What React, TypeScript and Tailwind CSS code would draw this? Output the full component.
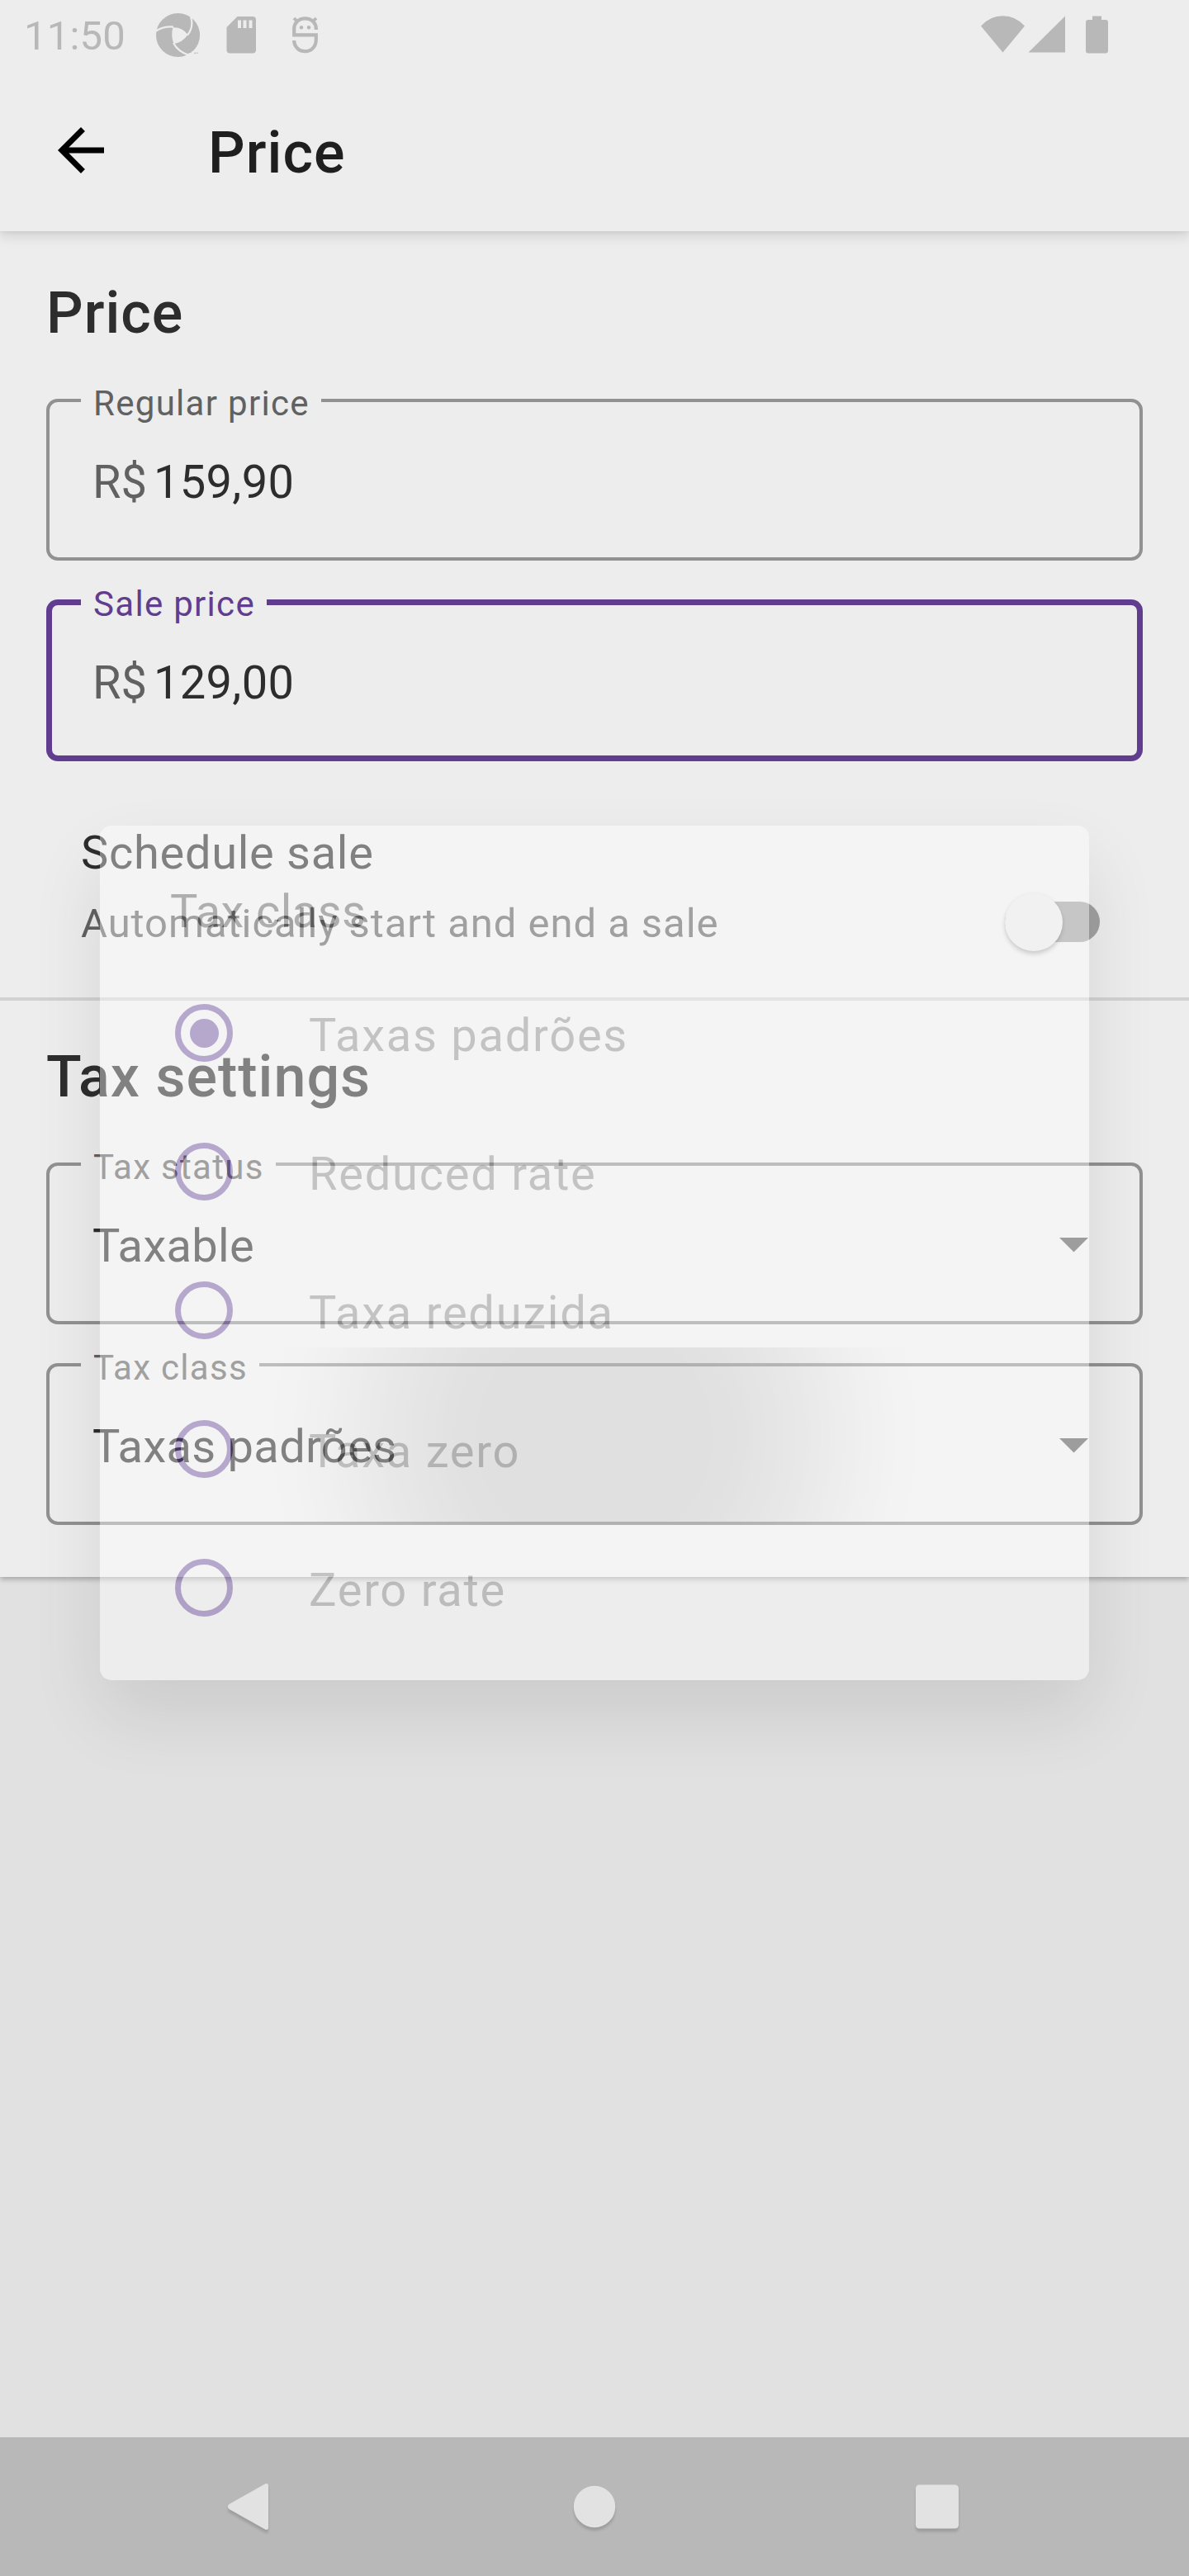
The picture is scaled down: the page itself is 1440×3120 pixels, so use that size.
import type { ReactNode } from 'react';

function StatusBar() {
  return (
    <div className="flex h-[84px] shrink-0 items-start text-[#b8b8b8]">
      <span className="ml-[29px] mt-[14px] w-[160px] text-[49px] leading-[60px] tracking-[0.2px]">11:50</span>
      <svg className="mt-[16px] h-[53px] w-[53px]" viewBox="0 0 53 53">
        <circle cx="26.5" cy="26.5" r="26.5" fill="currentColor" />
        <path d="M19 17.5Q31 16 38.5 26Q32 35.5 21.5 37Q17.5 28 20.5 16.5Z" fill="#ededed" />
        <path
          d="M0 21.5Q9 15.5 21 16.5M42 4.5Q46 17 38 26.5M21 36Q26.5 46.5 40 51"
          fill="none"
          stroke="#ededed"
          strokeWidth="2.2"
        />
        <path d="M35 52L42 46.500L53 43V53H35Z" fill="#ededed" />
        <path d="M34 40Q47 34 52.6 22Q54 38 42 48Q36 49 30 44Z" fill="currentColor" />
        <path d="M46 48h2M47 48v1.500M49 49v-1.500M50.500 49v-1.500" stroke="currentColor" strokeWidth=".8" />
      </svg>
      <svg className="ml-[32px] mt-[20px] h-[45px] w-[37px]" viewBox="0 0 37 45">
        <path
          fill="currentColor"
          fillRule="evenodd"
          d="M13.500 0H32a4 4 0 0 1 4 4V40.500a4 4 0 0 1-4 4H4.500a4 4 0 0 1-4-4V13ZM14 4.500V14h4V4.500ZM20.500 4.500V14h4V4.500ZM27.500 4.500V14H31.500V4.500Z"
        />
      </svg>
      <svg className="ml-[42px] mt-[20px] h-[45px] w-[34px]" viewBox="0 0 34 45" fill="none" stroke="currentColor">
        <path
          strokeWidth="4.200"
          d="M29.800 16V14.500C29.800 8 24.500 2.300 16.500 2.300S3.200 8 3.200 14.500V22.300H29.800V28C29.800 36 24.500 42.200 16.500 42.200S3.200 36 3.200 29"
        />
        <path strokeWidth="3.800" d="M3 2L7 6M30 2L26 6" />
        <circle cx="12" cy="13.300" r="2.200" fill="currentColor" stroke="none" />
        <circle cx="21" cy="13.300" r="2.200" fill="currentColor" stroke="none" />
      </svg>
      <div className="flex-1" />
      <svg className="mt-[19px] h-[45px] w-[53px]" viewBox="0 0 53 45" fill="currentColor">
        <path d="M0 12.500Q11 .3 26.500 .3T53 12.500L26.500 44.500Z" />
      </svg>
      <svg className="ml-[4px] mt-[19px] h-[45px] w-[45px]" viewBox="0 0 45 45" fill="currentColor">
        <path d="M.5 44.500L45 .5V44.500Z" />
      </svg>
      <svg className="ml-[25px] mr-[98px] mt-[19px] h-[46px] w-[27px]" viewBox="0 0 27 46" fill="currentColor">
        <path d="M8 .5H19V5H24a3 3 0 0 1 3 3V42.500a3 3 0 0 1-3 3H3a3 3 0 0 1-3-3V8a3 3 0 0 1 3-3H8Z" />
      </svg>
    </div>
  );
}

function Toolbar() {
  return (
    <div className="flex h-[196px] shrink-0 items-start">
      <svg className="ml-[56px] mt-[56px] h-[84px] w-[84px]" viewBox="0 0 24 24" fill="#000">
        <path d="M20 11H7.830l5.590-5.590L12 4l-8 8 8 8 1.410-1.410L7.830 13H20v-2z" />
      </svg>
      <h1 className="ml-[112px] mt-[60px] text-[70px] font-medium leading-[82px] tracking-[1.05px] text-[#1f1f1f]">
        Price
      </h1>
    </div>
  );
}

type FieldProps = { label: string; focused?: boolean; children: ReactNode };

function OutlinedField({ label, focused, children }: FieldProps) {
  return (
    <div
      className={
        'relative flex h-[196px] items-start rounded-[14px] px-[56px] pt-[68px] text-[56px] leading-[66px] tracking-[0.3px] text-[#2d2d2d] ' +
        (focused ? 'shadow-[inset_0_0_0_7px_#613d8f]' : 'shadow-[inset_0_0_0_4px_#919191]')
      }
    >
      <span
        className={
          'absolute left-[42px] top-[-19px] bg-[#ededed] pl-[15px] pr-[14px] text-[42px] leading-[50px] tracking-[1.3px] ' +
          (focused ? 'text-[#613d8f]' : 'text-[#616161]')
        }
      >
        {label}
      </span>
      {children}
    </div>
  );
}

function Money({ value }: { value: string }) {
  return (
    <>
      <span className="w-[74px] tracking-normal text-[#616161]">R$</span>
      <span>{value}</span>
    </>
  );
}

function Select({ value }: { value: string }) {
  return (
    <>
      <span className="flex-1">{value}</span>
      <svg className="mr-[10px] mt-[23px] h-[18px] w-[35px]" viewBox="0 0 35 18">
        <path d="M0 0H35L17.500 17.500Z" fill="#5c5c5c" />
      </svg>
    </>
  );
}

function SectionTitle({ children }: { children: ReactNode }) {
  return <h2 className="text-[70px] font-medium leading-[82px] tracking-[1px] text-[#2d2d2d]">{children}</h2>;
}

function TaxClassDialog() {
  const options = ['Taxas padrões', 'Reduced rate', 'Taxa reduzida', 'Taxa zero', 'Zero rate'];
  return (
    <div className="absolute left-[121px] top-[1000px] flex h-[1035px] w-[1198px] flex-col rounded-[14px] bg-white opacity-40 shadow-[0_42px_90px_rgba(0,0,0,0.25)]">
      <h3 className="ml-[85px] mt-[71px] text-[56px] leading-[66px] tracking-[0.4px] text-[#525252]">Tax class</h3>
      <div className="mt-[30px] flex flex-col">
        {options.map((option, i) => (
          <div key={option} className="flex h-[168px] items-center">
            <span className="ml-[91px] flex h-[70px] w-[70px] items-center justify-center rounded-full border-[7px] border-[#66419d]">
              {i === 0 && <span className="h-[35px] w-[35px] rounded-full bg-[#66419d]" />}
            </span>
            <span className="ml-[92px] mt-[6px] text-[56px] leading-[66px] tracking-[1.750px] text-[#878787]">
              {option}
            </span>
          </div>
        ))}
      </div>
    </div>
  );
}

function NavigationBar() {
  return (
    <nav className="relative flex h-[168px] shrink-0 items-center justify-between bg-[#b8b8b8] px-[272px] text-[#e2e2e2]">
      <svg className="h-[64px] w-[64px] overflow-visible drop-shadow-[0_4px_1.5px_rgba(0,0,0,0.14)]" viewBox="0 0 64 64" fill="currentColor">
        <path d="M49 4.500Q53 3 53 7V57Q53 61 49 59.500L5.500 35Q2.500 32 5.500 29Z" />
      </svg>
      <svg className="h-[64px] w-[64px] overflow-visible drop-shadow-[0_4px_1.5px_rgba(0,0,0,0.14)]" viewBox="0 0 64 64" fill="currentColor">
        <circle cx="32" cy="32" r="25.200" />
      </svg>
      <svg className="h-[64px] w-[64px] overflow-visible drop-shadow-[0_4px_1.5px_rgba(0,0,0,0.14)]" viewBox="0 0 64 64" fill="currentColor">
        <rect x="5" y="5.500" width="52" height="53" rx="4.500" />
      </svg>
    </nav>
  );
}

export default function App() {
  return (
    <div className="relative flex h-[3120px] w-[1440px] flex-col overflow-hidden whitespace-nowrap bg-[#e1e1e1] font-['Roboto',sans-serif]">
      <header className="relative z-10 flex h-[280px] shrink-0 flex-col bg-[#ededed] shadow-[0_7px_14px_rgba(0,0,0,0.1),0_2px_5px_rgba(0,0,0,0.06)]">
        <StatusBar />
        <Toolbar />
      </header>

      <main className="flex-1">
        <div className="h-[1630px] bg-[#ededed] shadow-[0_3px_6px_rgba(0,0,0,0.26)]">
          <section className="flex h-[928px] flex-col px-[56px] pt-[58px]">
            <SectionTitle>Price</SectionTitle>
            <div className="mt-[63px] flex flex-col gap-[47px]">
              <OutlinedField label="Regular price">
                <Money value="159,90" />
              </OutlinedField>
              <OutlinedField label="Sale price" focused>
                <Money value="129,00" />
              </OutlinedField>
            </div>
            <div className="mt-[78px] flex justify-between pl-[42px] pr-[52px]">
              <div className="flex flex-col">
                <span className="text-[56px] leading-[66px] tracking-[0.7px] text-[#2d2d2d]">Schedule sale</span>
                <span className="mt-[24px] text-[49px] leading-[58px] tracking-[0.95px] text-[#616161]">
                  Automatically start and end a sale
                </span>
              </div>
              <div className="mt-[92px] flex h-[49px] w-[115px] items-center rounded-full bg-[#a0a0a0]">
                <span className="h-[70px] w-[70px] shrink-0 rounded-full bg-[#e9e9e9] shadow-[0_4px_5px_rgba(0,0,0,0.24),0_0_4px_rgba(0,0,0,0.08)]" />
              </div>
            </div>
          </section>
          <section className="flex flex-col border-t-4 border-[#d1d1d1] px-[56px] pt-[51px]">
            <SectionTitle>Tax settings</SectionTitle>
            <div className="mt-[63px] flex flex-col gap-[47px]">
              <OutlinedField label="Tax status">
                <Select value="Taxable" />
              </OutlinedField>
              <OutlinedField label="Tax class">
                <Select value="Taxas padrões" />
                <div className="absolute bottom-0 left-0 right-0 top-[-19px] bg-[radial-gradient(circle_at_664px_107px,rgba(0,0,0,0.143)_130px,rgba(0,0,0,0.128)_170px,rgba(0,0,0,0.085)_245px,rgba(0,0,0,0.036)_317px,rgba(0,0,0,0.014)_350px,rgba(0,0,0,0)_395px)]" />
              </OutlinedField>
            </div>
          </section>
        </div>
      </main>

      <TaxClassDialog />
      <NavigationBar />
    </div>
  );
}
